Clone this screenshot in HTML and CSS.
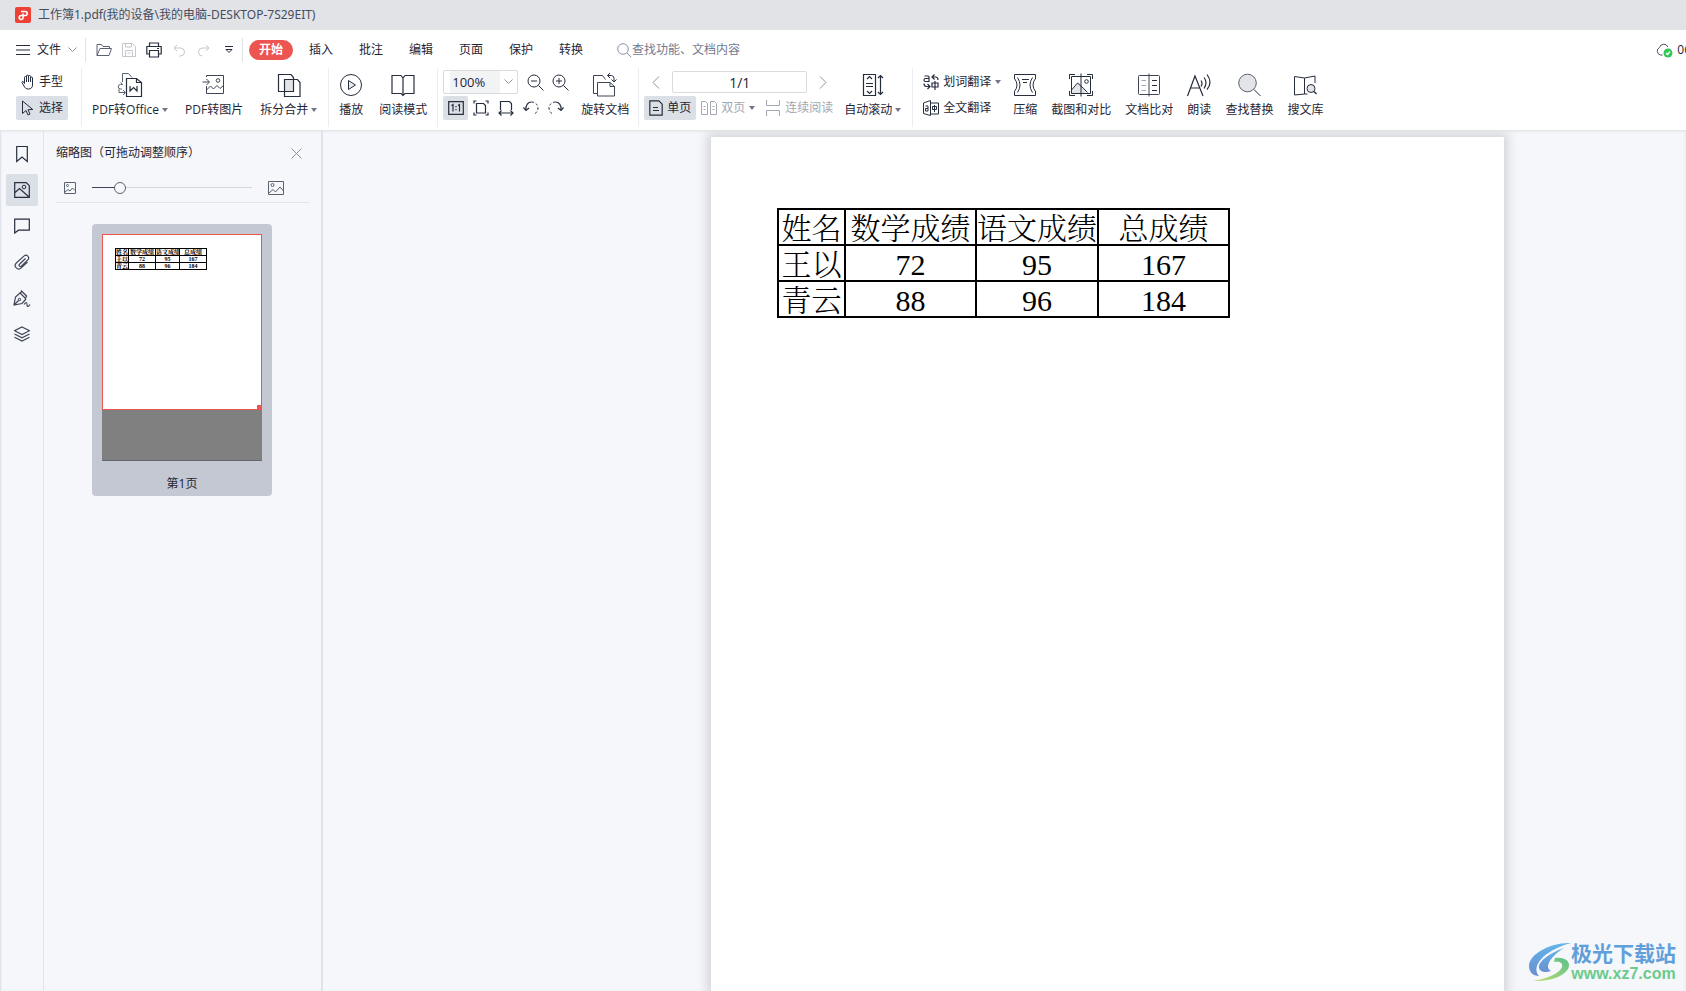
FILE: index.html
```html
<!DOCTYPE html>
<html lang="zh-CN">
<head>
<meta charset="utf-8">
<title>工作簿1.pdf</title>
<link rel="stylesheet" href="styles.css">
</head>
<body>
<header class="titlebar">
  <svg class="app-logo" width="16" height="16" viewBox="0 0 16 16"><rect width="16" height="16" rx="2" fill="#ee4136"/><path d="M6 4.500h4.200a2 2 0 0 1 0 4H6.300a2 2 0 1 0 1.800 2.600V6.600" fill="none" stroke="#fff" stroke-width="1.600"/></svg>
  <span>工作簿1.pdf(我的设备\我的电脑-DESKTOP-7S29EIT)</span>
</header>

<nav class="menubar">
  <button class="file-menu">
    <svg width="14" height="10" viewBox="0 0 14 10"><path d="M0 .5h14M0 5h14M0 9.500h14"/></svg>
    <span>文件</span>
    <svg class="muted" width="9" height="6" viewBox="0 0 9 6"><path d="M.5 .5l4 4 4-4"/></svg>
  </button>
  <span class="bar-rule"></span>
  <div class="quick">
    <button aria-label="打开"><svg width="16" height="14" viewBox="0 0 16 14"><path d="M1 12.500V1.500h4.500l1.500 2h6.500v2M1 12.500l3-7h11.500l-2.500 7z" stroke="#5a6170"/></svg></button>
    <button aria-label="保存"><svg width="14" height="14" viewBox="0 0 14 14"><path d="M.5 .5h10l3 3v10h-13zM3.500 .5v3.500h6V.5M3.500 13.500v-6h7v6M5.500 10h3" stroke="#c4c7cd"/></svg></button>
    <button aria-label="打印"><svg width="16" height="16" viewBox="0 0 16 16"><path d="M3.500 4.500V1h9v3.500M3.500 12H.8V4.500h14.400V12h-2.700M3.500 8.500h9v6.500h-9zM11 6.500h2" stroke-width="1.200"/></svg></button>
    <button aria-label="撤销"><svg width="12" height="13" viewBox="0 0 12 13"><path d="M4 1L1 4l3 3M1.200 4h6.300a4 4 0 0 1 0 8H6" stroke="#c4c7cd"/></svg></button>
    <button aria-label="重做"><svg width="12" height="13" viewBox="0 0 12 13"><path d="M8 1l3 3-3 3M10.800 4H4.500a4 4 0 0 0 0 8" stroke="#c4c7cd"/></svg></button>
    <button aria-label="更多"><svg width="8" height="8" viewBox="0 0 8 8"><path d="M0 .5h8M1 3.500h6L4 6.500z"/></svg></button>
  </div>
  <span class="bar-rule"></span>
  <div class="tabs">
    <button class="tab tab-active">开始</button>
    <button class="tab">插入</button>
    <button class="tab">批注</button>
    <button class="tab">编辑</button>
    <button class="tab">页面</button>
    <button class="tab">保护</button>
    <button class="tab">转换</button>
  </div>
  <label class="search">
    <svg width="15" height="15" viewBox="0 0 15 15"><circle cx="6" cy="6" r="5.300" stroke="#8b93a8"/><path d="M10 10l4.300 4.300" stroke="#8b93a8"/></svg>
    <input type="text" placeholder="查找功能、文档内容">
  </label>
  <div class="cloud">
    <svg width="17" height="15" viewBox="0 0 17 15"><path d="M6.500 12H4.500A4 4 0 0 1 3.500 4.500 4.500 4.500 0 0 1 12 4" stroke="#4a5162"/><circle cx="12" cy="10" r="4.500" fill="#37c558" stroke="none"/><path d="M10 10l1.500 1.500 2.500-3" stroke="#fff" stroke-width="1.200"/></svg>
    <span>06</span>
  </div>
</nav>

<section class="ribbon">
  <div class="group stack tools">
    <button class="small"><svg width="14" height="16" viewBox="0 0 14 16"><path d="M3.500 9.500V3.500a1 1 0 0 1 2 0V8V2a1 1 0 0 1 2 0V8V2.500a1 1 0 0 1 2 0V8V4a1 1 0 0 1 2 0v7c0 2.500-1.500 4-4 4S4 14 3 12L1 8.500c-.4-1 1-1.500 1.500-.7z"/></svg>手型</button>
    <button class="small pressed"><svg width="14" height="16" viewBox="0 0 14 16"><path d="M1.500 1v12.500l3.500-3 2 4.500 2-1-2-4.300 4.800-.2z"/></svg>选择</button>
  </div>
  <div class="group convert">
    <button class="big">
      <svg width="26" height="26" viewBox="0 0 26 26"><g stroke="#5a6170"><path d="M5.500 10V1.500h6l3.500 4M5.500 13a3 3 0 0 0-2-2.500M5 12.500H3.500a2 2 0 0 0 0 4.500H5M2 17v3.500h6M6 18l2.500 2.500L6 23"/></g><path d="M9.500 6.500h10l5 4V24.500h-15zM19.500 6.500v4h5M13 14v5l3.500-3.500L20 19v-5" stroke-width="1.200"/></svg>
      <span class="caption">PDF转Office<i class="caret"></i></span>
    </button>
    <button class="big">
      <svg width="26" height="26" viewBox="0 0 26 26"><g stroke="#3e4556"><path d="M5.500 5V3.500h17v18h-17V14M1.500 10h6.500M5.500 7l3 3-3 3M5.500 18l4-4 3 3 3.500-3.500 3 3 3.500-3"/><circle cx="17" cy="8.500" r="1.800"/></g></svg>
      <span class="caption">PDF转图片</span>
    </button>
    <button class="big">
      <svg width="26" height="26" viewBox="0 0 26 26"><path d="M8.500 7.500h9v12h-9z" fill="#e2e4e8"/><path d="M2.500 2.500h12.500l2.500 3V19.500h-15zM8.500 7.500h13l2.500 3V24.500h-15.500z" stroke-width="1.200"/></svg>
      <span class="caption">拆分合并<i class="caret"></i></span>
    </button>
  </div>
  <div class="group read">
    <button class="big"><svg width="26" height="26" viewBox="0 0 26 26"><circle cx="13" cy="13" r="10.500"/><path d="M10.500 8.500v9l7-4.500z" fill="#e8e9ec"/></svg><span class="caption">播放</span></button>
    <button class="big"><svg width="26" height="26" viewBox="0 0 26 26"><path d="M13 6v17M13 6l-2-2.500H2v18h9l2 2 2-2h9v-18h-9z" stroke-width="1.200"/></svg><span class="caption">阅读模式</span></button>
  </div>
  <div class="group zoom-group">
    <div class="stack">
      <div class="row">
        <div class="select-wrap">
          <select class="zoom" aria-label="缩放"><option>100%</option></select>
          <svg class="muted" width="9" height="6" viewBox="0 0 9 6"><path d="M.5 .5l4 4 4-4"/></svg>
        </div>
        <button class="glyph" aria-label="缩小"><svg width="17" height="17" viewBox="0 0 17 17"><circle cx="7" cy="7" r="6"/><path d="M4 7h6M11.500 11.500l5 5"/></svg></button>
        <button class="glyph" aria-label="放大"><svg width="17" height="17" viewBox="0 0 17 17"><circle cx="7" cy="7" r="6"/><path d="M4 7h6M7 4v6M11.500 11.500l5 5"/></svg></button>
      </div>
      <div class="row">
        <button class="glyph pressed" aria-label="实际大小"><svg width="16" height="14" viewBox="0 0 16 14"><path d="M.7 .7h14.600v12.600H.7zM3.500 4.500l1.500-1V10.500M10 4.500l1.500-1V10.500M8 5v1.200M8 8v1.200" stroke-width="1.200"/></svg></button>
        <button class="glyph" aria-label="适合页面"><svg width="16" height="16" viewBox="0 0 16 16"><path d="M3.500 3.500h7l2 2v7.500h-9zM1 3.500V1h2.500M12.500 1H15v2.500M15 12.500V15h-2.500M3.500 15H1v-2.500" stroke-width="1.200"/></svg></button>
        <button class="glyph" aria-label="适合宽度"><svg width="16" height="16" viewBox="0 0 16 16"><path d="M2.500 10V1.500h9l2 2V10M1 13h14M3.500 10.500L1 13l2.500 2.500M12.500 10.500L15 13l-2.500 2.500" stroke-width="1.200"/></svg></button>
        <button class="glyph" aria-label="向左旋转"><svg width="16" height="16" viewBox="0 0 16 16"><path d="M3 10C2.500 5 5 2 8.500 2" stroke-width="1.200"/><path d="M8.500 2c4 0 6.500 3 6.500 6s-2 5.500-4 6" stroke-dasharray="2.500 2"/><path d="M.5 7.500L3 10.500l3-2.500" stroke-width="1.200"/></svg></button>
        <button class="glyph" aria-label="向右旋转"><svg width="16" height="16" viewBox="0 0 16 16"><path d="M13 10c.5-5-2-8-5.500-8" stroke-width="1.200"/><path d="M7.500 2C3.500 2 1 5 1 8s2 5.500 4 6" stroke-dasharray="2.500 2"/><path d="M15.500 7.500L13 10.500 10 8" stroke-width="1.200"/></svg></button>
      </div>
    </div>
    <button class="big"><svg width="26" height="26" viewBox="0 0 26 26"><g stroke="#3e4556"><path d="M6 21.500H1.500v-18h9l3 4M5.500 10.500h12.500l4.500 4v9.500h-17zM18 10.500v4h4.500"/></g><path d="M15.500 3.500h4a3 3 0 0 1 2.500 3v3M18 1l-2.500 2.500L18 6M19.500 7.500L22 10l2.500-2.500"/></svg><span class="caption">旋转文档</span></button>
  </div>
  <div class="group page-group">
    <div class="stack">
      <div class="row pager">
        <button class="nav" aria-label="上一页"><svg width="8" height="13" viewBox="0 0 8 13"><path d="M7 .5l-6 6 6 6" stroke="#8d929c"/></svg></button>
        <input class="page-no" type="text" value="1/1" aria-label="页码">
        <button class="nav" aria-label="下一页"><svg width="8" height="13" viewBox="0 0 8 13"><path d="M1 .5l6 6-6 6" stroke="#8d929c"/></svg></button>
      </div>
      <div class="row modes">
        <button class="small pressed"><svg width="14" height="16" viewBox="0 0 14 16"><path d="M.8 .8h9l3.400 3.400v11H.8zM4 7.500h5M4 10.500h6" stroke-width="1.200"/></svg>单页</button>
        <button class="small off"><svg width="16" height="16" viewBox="0 0 16 16"><path d="M.5 1.500h4l2 2v11h-6zM9.500 1.500h4l2 2v11h-6zM2.500 6.500h2M2.500 9.500h2M11.500 6.500h2M11.500 9.500h2"/></svg>双页<i class="caret"></i></button>
        <button class="small off"><svg width="16" height="16" viewBox="0 0 16 16"><path d="M1.500 0v5.500h13V0M1.500 16v-5.500h13V16"/></svg>连续阅读</button>
      </div>
    </div>
    <button class="big"><svg width="26" height="26" viewBox="0 0 26 26"><path d="M3.500 2.500h12v21h-12zM7 7l2.500-2.500L12 7M7 19l2.500 2.500L12 19M6 11.500h7M6 14.500h7M20.500 3.500v19M18 6l2.500-2.500L23 6M18 20l2.500 2.500L23 20" stroke-width="1.200"/></svg><span class="caption">自动滚动<i class="caret"></i></span></button>
  </div>
  <div class="group extras">
    <div class="stack translate">
      <button class="small"><svg width="16" height="16" viewBox="0 0 16 16"><path d="M1.500 2h3.500q1 0 1 1v4.500H2.500a1.500 1.500 0 0 1 0-3H6M11.500 .5L9 3l2.500 2.500M9.200 3h3.300q2.500 0 2.500 3M1 9.500q0 3 2.500 3h3M4.500 10L7 12.500 4.500 15M9 9h6v4H9zM12 7v9" stroke-width="1.200"/></svg>划词翻译<i class="caret"></i></button>
      <button class="small"><svg width="16" height="16" viewBox="0 0 16 16"><path d="M7.500 .5L.5 3v10.500l7 2zM7.500 3h8v11h-8M2.500 6H5v5H2.500V8.500H5M9.500 6.500h4v3h-4zM11.500 5v7"/></svg>全文翻译</button>
    </div>
    <button class="big"><svg width="26" height="26" viewBox="0 0 26 26"><path d="M2.500 7V2.500h21V7M2.500 19v4.500h21V19M2.500 6.500q5 6.500 0 13M5.500 5.500q5 7.500 0 15M23.500 6.500q-5 6.500 0 13M20.500 5.500q-5 7.500 0 15M10 7.500h7M11 10.500h4"/></svg><span class="caption">压缩</span></button>
    <button class="big"><svg width="26" height="26" viewBox="0 0 26 26"><path d="M3.500 19l7-9 7 7V21.500h-14z" fill="#e2e4e8" stroke="none"/><path d="M3.500 4.500h19v17h-19zM1.500 7V2.500H7M19 2.500h5.500V7M24.500 19v4.500H19M7 23.500H1.500V19M13 1.500v23M3.500 18l6-7 6 5.500 4 4"/><circle cx="18.500" cy="9.500" r="1.800"/></svg><span class="caption">截图和对比</span></button>
    <button class="big"><svg width="26" height="26" viewBox="0 0 26 26"><path d="M13 1.500v23M13 3.500H3.500q-1 0-1 1v17q0 1 1 1H13M13 3.500h9.500q1 0 1 1v17q0 1-1 1H13" stroke="#3e4556"/><path d="M5.500 8.500h4.500M5.500 13.500h4.500M5.500 18.500h4.500" stroke="#a4a8b0"/><path d="M16 8.500h5M16 13.500h5M16 18.500h5" stroke-width="1.200"/></svg><span class="caption">文档比对</span></button>
    <button class="big"><svg width="26" height="26" viewBox="0 0 26 26"><path d="M1.500 24L9 4l8 20M4.500 16h9.500M15 8.500q2 3 0 6M18 5.500q4 5 0 11M21 2.500q6 8 0 15" stroke-width="1.200"/></svg><span class="caption">朗读</span></button>
    <button class="big"><svg width="26" height="26" viewBox="0 0 26 26"><circle cx="11.500" cy="11" r="8.800" fill="#e2e4e8" stroke="#5a6170"/><path d="M18 17.500l6.500 6.500"/></svg><span class="caption">查找替换</span></button>
    <button class="big"><svg width="26" height="26" viewBox="0 0 26 26"><path d="M12.500 6v16l-10 1V4.500zM12.500 6l10.500-2v7M12.500 22h3"/><circle cx="19" cy="16.500" r="4" fill="#e2e4e8"/><path d="M22 19.500l2.500 2.500" stroke-width="1.400"/></svg><span class="caption">搜文库</span></button>
  </div>
</section>

<main class="workspace">
  <aside class="rail">
    <button aria-label="书签"><svg width="16" height="18" viewBox="0 0 16 18"><path d="M2.700 1.500h10.600v15L8 12l-5.300 4.500z" stroke-width="1.200"/></svg></button>
    <button class="pressed" aria-label="缩略图"><svg width="16" height="16" viewBox="0 0 16 16"><path d="M.7 .7h11.600l3 3v11.600H.7zM1 10.500l4.500-4 9 8" stroke-width="1.200"/><circle cx="10" cy="5" r="1.800"/></svg></button>
    <button aria-label="批注"><svg width="16" height="16" viewBox="0 0 16 16"><path d="M.7 1.200h14.600v11H4.500L.7 15z" stroke-width="1.200"/></svg></button>
    <button aria-label="附件"><svg width="16" height="16" viewBox="0 0 16 16"><path d="M11.500 4.500l-6 5.800a1.300 1.300 0 0 0 1.900 1.900l6.600-6.500a2.700 2.700 0 0 0-3.800-3.800L2.300 9a3.400 3.400 0 0 0 4.900 4.900L13.500 8" stroke="#3e4556" stroke-width="1.200"/></svg></button>
    <button aria-label="签名"><svg width="18" height="18" viewBox="0 0 18 18"><path d="M8 1.500l6 6M7 4L2.500 8 1 16l8-1.500L13 10M7 4L9 2.500l4.500 4.500L12.500 9.500zM1 16l4.500-4.500M11 15.500q3-4 3 0t3 0" stroke="#3e4556" stroke-width="1.200"/><circle cx="6.500" cy="10.500" r="1.200"/></svg></button>
    <button aria-label="图层"><svg width="16" height="16" viewBox="0 0 16 16"><path d="M8 1l7.500 3.700L8 8.500.5 4.700zM.5 8L8 11.800 15.500 8M.5 11.300L8 15l7.500-3.700" stroke="#3e4556" stroke-width="1.200"/></svg></button>
  </aside>
  <aside class="panel">
    <div class="panel-head">
      <h2>缩略图（可拖动调整顺序）</h2>
      <button aria-label="关闭"><svg width="11" height="11" viewBox="0 0 11 11"><path d="M.5 .5l10 10M10.500 .5l-10 10" stroke="#8d929c"/></svg></button>
    </div>
    <div class="sizer">
      <svg width="12" height="12" viewBox="0 0 12 12"><path d="M.5 .5h11v11H.5zM1 10l3-2.500L6 9l2.500-3L11 8.500" stroke="#5a6170"/><circle cx="3.500" cy="3.500" r="1" stroke="#5a6170"/></svg>
      <input type="range" min="0" max="100" value="15" aria-label="缩略图大小">
      <svg width="16" height="14" viewBox="0 0 16 14"><path d="M.5 .5h15v13H.5zM1 12l4-3.500L7.500 11 12 6l3.500 4" stroke="#5a6170"/><circle cx="4.500" cy="4" r="1.500" stroke="#5a6170"/></svg>
    </div>
    <figure class="thumb">
      <div class="thumb-sheet">
        <div class="thumb-view">
          <table class="grades mini">
            <tr><th class="m-name">姓名</th><th class="m-math">数学成绩</th><th class="m-lang">语文成绩</th><th class="m-sum">总成绩</th></tr>
            <tr><td>王以</td><td>72</td><td>95</td><td>167</td></tr>
            <tr><td>青云</td><td>88</td><td>96</td><td>184</td></tr>
          </table>
          <span class="handle"></span>
        </div>
      </div>
      <figcaption>第1页</figcaption>
    </figure>
  </aside>
  <div class="canvas">
    <article class="page">
      <table class="grades">
        <tr><th class="c-name">姓名</th><th class="c-math">数学成绩</th><th class="c-lang">语文成绩</th><th class="c-sum">总成绩</th></tr>
        <tr><td>王以</td><td>72</td><td>95</td><td>167</td></tr>
        <tr><td>青云</td><td>88</td><td>96</td><td>184</td></tr>
      </table>
    </article>
  </div>
</main>

<div class="watermark">
  <svg width="42" height="40" viewBox="0 0 42 40">
    <defs><linearGradient id="wave" x1="0" y1="0" x2="0" y2="1"><stop offset="0" stop-color="#62b5ea"/><stop offset="1" stop-color="#6a8fd0"/></linearGradient><linearGradient id="leaf" x1="1" y1="0" x2="0" y2="1"><stop offset="0" stop-color="#58c08a"/><stop offset="1" stop-color="#c5dc74"/></linearGradient></defs>
    <path d="M42 1C22 0 0 12 0 24c0 6 4 10 10 10-8-9 3-25 32-33z" fill="url(#wave)"/>
    <path d="M35 6C20 11 9 20 10 26c1 4 6 5 12 3-6-3-3-13 13-23z" fill="url(#wave)"/>
    <path d="M26 16c8-1 14 2 14 7 0 9-16 17-36 16 14-2 27-8 29-14 1-4-2-6-8-5z" fill="url(#leaf)"/>
  </svg>
  <div class="watermark-text"><strong>极光下载站</strong><span>www.xz7.com</span></div>
</div>
</body>
</html>
```

FILE: styles.css
```css
* { box-sizing: border-box; }

body {
  margin: 0;
  height: 100vh;
  display: flex;
  flex-direction: column;
  overflow: hidden;
  position: relative;
  background: #fff;
  color: #1f2635;
  font: 12px/16px "Open Sans", "Noto Sans CJK SC", sans-serif;
}

button, input, select { font: inherit; color: inherit; }

button {
  display: flex;
  align-items: center;
  justify-content: center;
  padding: 0;
  border: 0;
  border-radius: 2px;
  background: none;
  white-space: nowrap;
}

svg { display: block; flex: none; fill: none; stroke: #262d3d; }
.muted { stroke: #8d929c; }
.app-logo, .watermark svg { stroke: none; }
.pressed { background: #dbe0e6; }

.titlebar {
  flex: none;
  display: flex;
  align-items: center;
  gap: 7px;
  height: 30px;
  padding-left: 15px;
  background: #e1e3e7;
  color: #454d5e;
  font-family: "Noto Sans", "Noto Sans CJK SC", sans-serif;
}

.menubar {
  flex: none;
  display: flex;
  align-items: center;
  height: 38px;
  padding: 2px 0 0 16px;
}
.file-menu { gap: 7px; }
.bar-rule { width: 1px; height: 24px; margin: 0 6px 0 8px; background: #dfe1e5; }
.quick { display: flex; gap: 1px; margin-right: -7px; }
.quick button { width: 24px; height: 24px; }
.tabs { display: flex; gap: 6px; }
.tab { width: 44px; height: 20px; border-radius: 10px; }
.tab-active { background: #ec5550; color: #fff; font-weight: bold; }
.search { display: flex; align-items: center; margin-left: 24px; color: #717a90; }
.search input { width: 160px; padding: 0; border: 0; outline: 0; background: none; }
.search input::placeholder { color: #717a90; opacity: 1; }
.cloud { display: flex; align-items: center; gap: 4px; margin-left: auto; margin-right: -5px; }

.ribbon { flex: none; display: flex; height: 62px; padding-left: 16px; }
.group { display: flex; align-items: flex-start; height: 59px; border-right: 1px solid #ebedf0; }
.group:last-child { border-right: 0; }
.stack { display: flex; flex-direction: column; gap: 2px; padding-top: 2px; }
.row { display: flex; align-items: center; height: 24px; }
.small { gap: 4px; height: 24px; padding: 0 5px; }
.big { flex-direction: column; gap: 4px; padding-top: 4px; }
.big svg { margin: 0 -1px; }
.caption { display: flex; align-items: center; }
.caret { border: 3px solid transparent; border-top: 4px solid #6f7788; border-bottom: 0; }
.caption .caret { margin-left: 3px; }

.tools { width: 66px; padding-right: 13px; }
.convert { gap: 17px; padding: 0 11px 0 10px; }
.read { gap: 16px; padding: 0 10px 0 10px; }

.zoom-group { gap: 8px; padding: 0 9px 0 5px; }
.select-wrap { position: relative; width: 75px; height: 24px; margin-right: 5px; }
.select-wrap svg { position: absolute; right: 5px; top: 9px; pointer-events: none; }
.zoom {
  appearance: none;
  width: 100%;
  height: 100%;
  padding: 0 8px;
  border: 1px solid #d9dbe0;
  border-radius: 2px;
  background: linear-gradient(90deg, #fff 6px, #f2f3f5 6px, #f2f3f5 56px, #fff 56px);
  font-size: 13px;
}
.glyph { width: 25px; height: 24px; }

.page-group { gap: 6px; padding: 0 11px 0 5px; }
.pager { gap: 12px; padding-left: 8px; }
.nav { width: 8px; height: 24px; }
.page-no {
  width: 135px;
  height: 22px;
  padding: 0;
  border: 1px solid #d9dbe0;
  border-radius: 2px;
  text-align: center;
  font-size: 14px;
}
.off { color: #a4a8b0; }
.off svg { stroke: #a4a8b0; }

.extras { gap: 14px; padding-left: 5px; }
.translate { align-items: flex-start; margin-right: -7px; }

.workspace {
  flex: 1;
  display: flex;
  min-height: 0;
  background: #f5f7fa;
  box-shadow: inset 0 1px 3px #dcdee1;
}
.rail {
  flex: none;
  display: flex;
  flex-direction: column;
  align-items: center;
  gap: 4px;
  width: 44px;
  padding-top: 8px;
  border-left: 1px solid #e1e3ea;
  border-right: 1px solid #e1e3ea;
}
.rail button { width: 32px; height: 32px; }

.panel { flex: none; width: 279px; border-right: 2px solid #e1e3ea; padding: 13px 12px 0; }
.panel-head { display: flex; align-items: center; justify-content: space-between; height: 20px; padding-right: 7px; }
.panel-head h2 { margin: 0; font: inherit; }
.sizer {
  display: flex;
  align-items: center;
  justify-content: space-between;
  margin-top: 10px;
  height: 30px;
  padding: 0 25px 0 8px;
  border-bottom: 1px solid #e1e3ea;
}
.sizer input { appearance: none; width: 160px; height: 12px; margin: 0; background: linear-gradient(90deg, #3e4556 24px, #d3d6dc 24px) center / 100% 1px no-repeat; }
.sizer input::-webkit-slider-thumb {
  appearance: none;
  width: 12px;
  height: 12px;
  border: 1px solid #5a6170;
  border-radius: 50%;
  background: #f5f7fa;
}

.thumb { width: 180px; margin: 21px auto 0 36px; padding: 10px 10px 4px; border-radius: 4px; background: #c4c8d3; }
.thumb-sheet { height: 227px; background: #808080; border-bottom: 1px solid #646a73; }
.thumb-view { position: relative; height: 176px; padding: 13px 12px; border: 1px solid #ec5550; background: #fff; }
.handle { position: absolute; right: 0; bottom: 0; width: 4px; height: 4px; background: #ec5550; }
.thumb figcaption { padding-top: 15px; text-align: center; }

.canvas { flex: 1; overflow: hidden; padding: 7px 182px 0 388px; }
.page {
  height: 100%;
  padding: 71px 66px;
  background: #fff;
  box-shadow: 0 0 10px 4px #d3d5d8;
}

.grades {
  border-collapse: collapse;
  color: #000;
  font: 30px/31px "Liberation Serif", "Noto Serif CJK SC", "Noto Sans CJK SC", serif;
  text-align: center;
  white-space: nowrap;
}
.grades th, .grades td { height: 36px; padding: 3px 0 0; border: 2px solid #000; font-weight: 300; }
.c-name { width: 67px; }
.c-math { width: 131px; }
.c-lang { width: 122px; }
.c-sum { width: 131px; }
.mini { width: 92px; table-layout: fixed; font-size: 6px; line-height: 6px; }
.mini th, .mini td { height: 7px; padding: 0; border-width: 1px; font-weight: bold; }
.m-name { width: 13px; }
.m-math { width: 27px; }
.m-lang { width: 24px; }
.m-sum { width: 27px; }

.watermark { position: absolute; right: 10px; bottom: 8px; display: flex; align-items: center; }
.watermark-text { display: flex; flex-direction: column; align-items: center; }
.watermark strong { color: #619fda; font-size: 21px; line-height: 24px; }
.watermark span { color: #6bcb8c; font: bold 16px/18px "Liberation Sans", sans-serif; }
```
